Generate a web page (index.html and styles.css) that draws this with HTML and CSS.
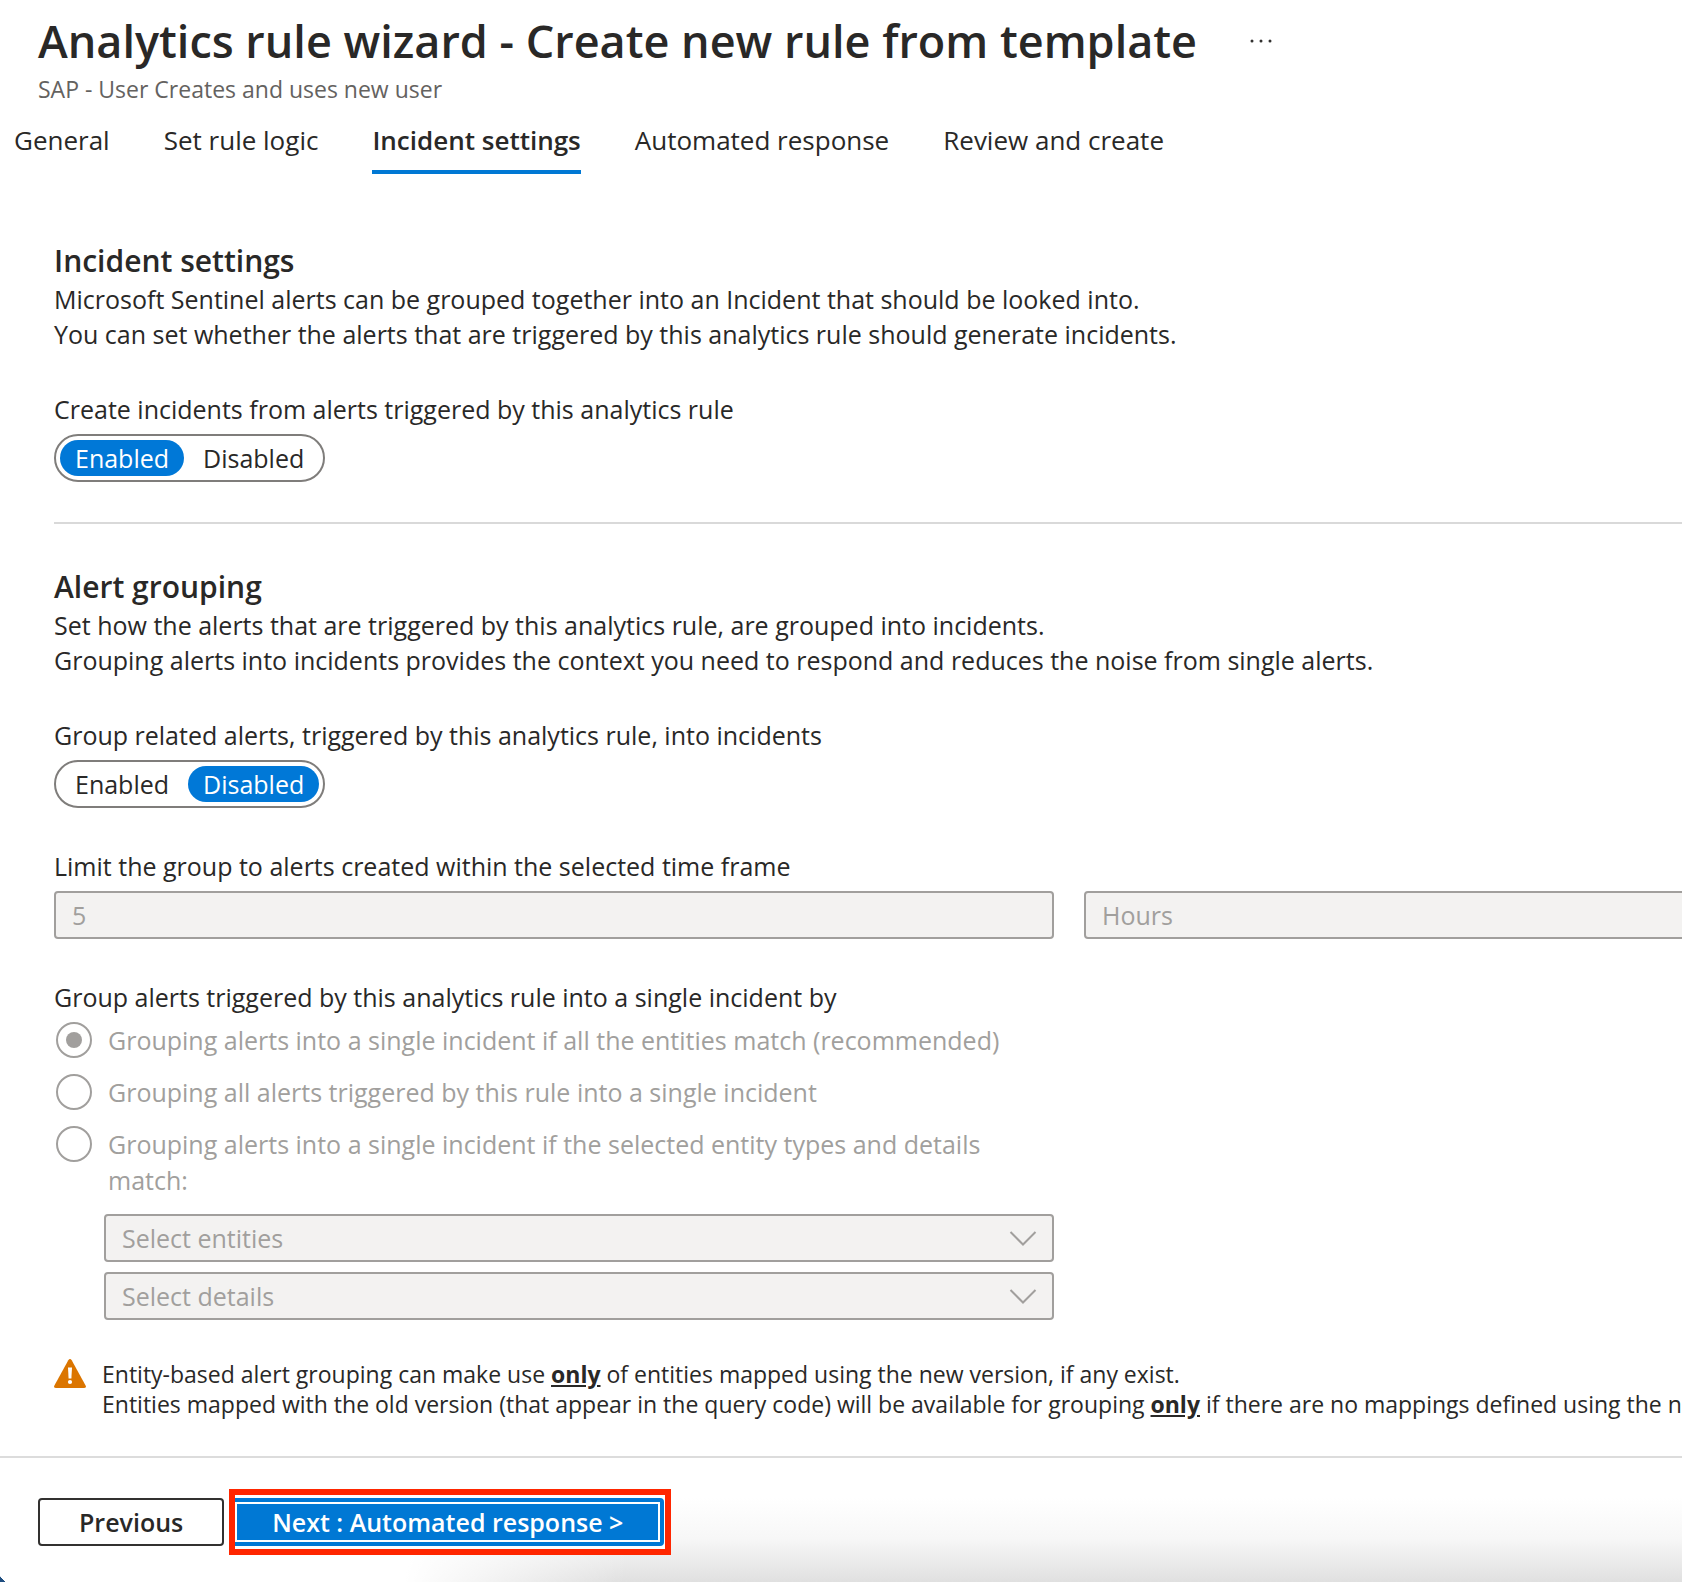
FILE: index.html
```html
<!DOCTYPE html>
<html lang="en">
<head>
<meta charset="utf-8">
<meta name="viewport" content="width=device-width, initial-scale=1">
<title>Analytics rule wizard</title>
<link rel="stylesheet" href="styles.css">
</head>
<body>
<div class="wizard">
  <header class="header">
    <div class="title-row">
      <h1 class="title">Analytics rule wizard - Create new rule from template</h1>
      <button class="more" type="button" aria-label="More actions">
        <svg width="24" height="6" viewBox="0 0 24 6" fill="#323130"><circle cx="3" cy="3" r="1.5"/><circle cx="12" cy="3" r="1.5"/><circle cx="21" cy="3" r="1.5"/></svg>
      </button>
    </div>
    <p class="subtitle">SAP - User Creates and uses new user</p>
  </header>

  <nav class="tabs" role="tablist">
    <button class="tab" type="button" role="tab">General</button>
    <button class="tab" type="button" role="tab">Set rule logic</button>
    <button class="tab tab-active" type="button" role="tab" aria-selected="true">Incident settings</button>
    <button class="tab" type="button" role="tab">Automated response</button>
    <button class="tab" type="button" role="tab">Review and create</button>
  </nav>

  <main class="content">
    <section class="section">
      <h2 class="heading">Incident settings</h2>
      <p class="text">Microsoft Sentinel alerts can be grouped together into an Incident that should be looked into.<br>You can set whether the alerts that are triggered by this analytics rule should generate incidents.</p>
      <div class="fields">
        <div class="field">
          <span class="label" id="create-label">Create incidents from alerts triggered by this analytics rule</span>
          <div class="toggle" role="group" aria-labelledby="create-label">
            <button class="option option-on" type="button" aria-pressed="true">Enabled</button>
            <button class="option" type="button" aria-pressed="false">Disabled</button>
          </div>
        </div>
      </div>
    </section>

    <section class="section section-ruled">
      <h2 class="heading">Alert grouping</h2>
      <p class="text">Set how the alerts that are triggered by this analytics rule, are grouped into incidents.<br>Grouping alerts into incidents provides the context you need to respond and reduces the noise from single alerts.</p>
      <div class="fields">
        <div class="field">
          <span class="label" id="group-label">Group related alerts, triggered by this analytics rule, into incidents</span>
          <div class="toggle" role="group" aria-labelledby="group-label">
            <button class="option" type="button" aria-pressed="false">Enabled</button>
            <button class="option option-on" type="button" aria-pressed="true">Disabled</button>
          </div>
        </div>

        <div class="field">
          <label class="label" for="limit">Limit the group to alerts created within the selected time frame</label>
          <div class="limit-row">
            <input class="box limit-value" id="limit" type="text" value="5" disabled>
            <select class="box limit-unit" aria-label="Time unit" disabled><option>Hours</option></select>
          </div>
        </div>

        <fieldset class="field group-by">
          <legend class="label">Group alerts triggered by this analytics rule into a single incident by</legend>
          <div class="choices">
            <label class="choice"><input class="radio" type="radio" name="groupby" checked disabled><span>Grouping alerts into a single incident if all the entities match (recommended)</span></label>
            <label class="choice"><input class="radio" type="radio" name="groupby" disabled><span>Grouping all alerts triggered by this rule into a single incident</span></label>
            <label class="choice"><input class="radio" type="radio" name="groupby" disabled><span>Grouping alerts into a single incident if the selected entity types and details match:</span></label>
            <div class="pickers">
              <div class="picker">
                <select class="box" aria-label="Entities" disabled><option>Select entities</option></select>
                <svg class="chevron" width="28" height="16" viewBox="0 0 28 16" fill="none" stroke="#a19f9d" stroke-width="2"><path d="M1.500 2 14 14.500 26.500 2"/></svg>
              </div>
              <div class="picker">
                <select class="box" aria-label="Details" disabled><option>Select details</option></select>
                <svg class="chevron" width="28" height="16" viewBox="0 0 28 16" fill="none" stroke="#a19f9d" stroke-width="2"><path d="M1.500 2 14 14.500 26.500 2"/></svg>
              </div>
            </div>
          </div>
        </fieldset>
      </div>

      <div class="notice">
        <svg class="notice-icon" width="32" height="30" viewBox="0 0 32 30"><path d="M14.300 1.200Q16-1.200 17.700 1.200L31.600 26.400Q32.800 29 29.800 29H2.200Q-.8 29 .4 26.400Z" fill="#db7500"/><path d="M14 8.500H18L17.400 19.500H14.600Z" fill="#fff"/><circle cx="16" cy="23" r="2.100" fill="#fff"/></svg>
        <p class="notice-text">Entity-based alert grouping can make use <b class="only">only</b> of entities mapped using the new version, if any exist.<br>Entities mapped with the old version (that appear in the query code) will be available for grouping <b class="only">only</b> if there are no mappings defined using the new version.</p>
      </div>
    </section>
  </main>

  <footer class="footer">
    <button class="button" type="button">Previous</button>
    <div class="highlight"><button class="button button-primary" type="button">Next : Automated response &gt;</button></div>
  </footer>
</div>
</body>
</html>
```
FILE: styles.css
```css
* {
  box-sizing: border-box;
}

body {
  margin: 0;
  background: #fff;
  color: #292827;
  font: 25px/35px "Open Sans", "Noto Sans", sans-serif;
  overflow-x: hidden;
}

h1,
h2,
p {
  margin: 0;
}

button,
input,
select {
  font: inherit;
  color: inherit;
  margin: 0;
}

.wizard {
  display: flex;
  flex-direction: column;
  min-height: 100vh;
  overflow: hidden;
}

.header {
  padding: 9px 38px 0;
}

.title-row {
  display: flex;
  align-items: center;
  gap: 52px;
}

.title {
  font-size: 45px;
  line-height: 64px;
  font-weight: 600;
}

.more {
  display: flex;
  padding: 0;
  border: 0;
  background: none;
}

.subtitle {
  font-size: 23px;
  line-height: 32px;
  color: #646260;
}

.tabs {
  display: flex;
  gap: 54px;
  padding: 17px 14px 0;
}

.tab {
  padding: 0 0 12px;
  border: 0;
  border-bottom: 4px solid transparent;
  background: none;
  font-size: 26px;
  line-height: 36px;
  white-space: nowrap;
}

.tab-active {
  border-color: #0078d4;
  font-weight: 600;
}

.content {
  padding: 66px 0 37px 54px;
}

.section-ruled {
  margin-top: 40px;
  padding-top: 42px;
  border-top: 2px solid #d9d9d9;
}

.heading {
  font-size: 30px;
  line-height: 42px;
  font-weight: 600;
}

.fields {
  display: flex;
  flex-direction: column;
  gap: 41px;
  margin-top: 40px;
}

.field {
  display: flex;
  flex-direction: column;
  align-items: flex-start;
  gap: 7px;
}

.toggle {
  display: flex;
  gap: 4px;
  padding: 4px;
  border: 2px solid #7f7d7b;
  border-radius: 24px;
}

.option {
  height: 36px;
  padding: 0 15px;
  border: 0;
  border-radius: 18px;
  background: none;
  line-height: 36px;
}

.option-on {
  background: #0078d7;
  color: #fff;
}

.box {
  appearance: none;
  width: 100%;
  height: 48px;
  padding: 0 16px;
  border: 2px solid #a19f9d;
  border-radius: 4px;
  background: #f3f2f1;
  color: #a19f9d;
  opacity: 1;
}

.limit-row {
  display: flex;
  gap: 30px;
  align-self: stretch;
  margin-right: -8px;
}

.limit-value {
  flex: 0 1 1000px;
}

.limit-unit {
  flex: 1 1 0;
}

.group-by {
  display: block;
  min-width: 0;
  max-width: 1000px;
  margin: 0;
  padding: 0;
  border: 0;
}

.group-by .label {
  padding: 0;
}

.choices {
  display: flex;
  flex-direction: column;
  gap: 16px;
  padding-top: 7px;
}

.choice {
  display: flex;
  gap: 16px;
  padding: 0 40px 0 2px;
  color: #a19f9d;
  line-height: 36px;
}

.radio {
  appearance: none;
  flex: none;
  display: grid;
  place-items: center;
  width: 36px;
  height: 36px;
  border: 2px solid #a19f9d;
  border-radius: 50%;
}

.radio:checked::before {
  content: "";
  width: 16px;
  height: 16px;
  border-radius: 50%;
  background: #a19f9d;
}

.pickers {
  display: flex;
  flex-direction: column;
  gap: 10px;
  padding-left: 50px;
}

.picker {
  display: grid;
  align-items: center;
}

.picker > * {
  grid-area: 1 / 1;
}

.chevron {
  justify-self: end;
  margin-right: 17px;
  pointer-events: none;
}

.notice {
  display: flex;
  gap: 16px;
  margin-top: 39px;
}

.notice-icon {
  flex: none;
}

.notice-text {
  font-size: 23px;
  line-height: 30px;
  white-space: nowrap;
}

.only {
  text-decoration: underline;
}

.footer {
  flex: 1;
  display: flex;
  align-items: flex-start;
  gap: 5px;
  padding: 31px 38px 26px;
  border-top: 2px solid #dcdcdc;
  background:
    linear-gradient(to top right, #1f4e80 50%, transparent 51%) left bottom / 5px 6px no-repeat,
    linear-gradient(100deg, #fff 25%, transparent 38%),
    linear-gradient(to bottom, #fff 32%, #f7f7f7 65%, #e0e0e0);
}

.button {
  height: 48px;
  margin: 9px 0;
  padding: 0 39px;
  border: 2px solid #323130;
  border-radius: 4px;
  background: #fff;
  font-weight: 600;
  line-height: 36px;
  white-space: nowrap;
}

.highlight {
  display: flex;
  padding-right: 1px;
  border: 6px solid #ff2600;
  background: #fff;
  overflow: hidden;
}

.button-primary {
  margin: 3px 0 3px -4px;
  border-color: #0078d4;
  background: #0078d4;
  color: #fff;
  outline: 2px solid #fff;
  outline-offset: -6px;
}
```
